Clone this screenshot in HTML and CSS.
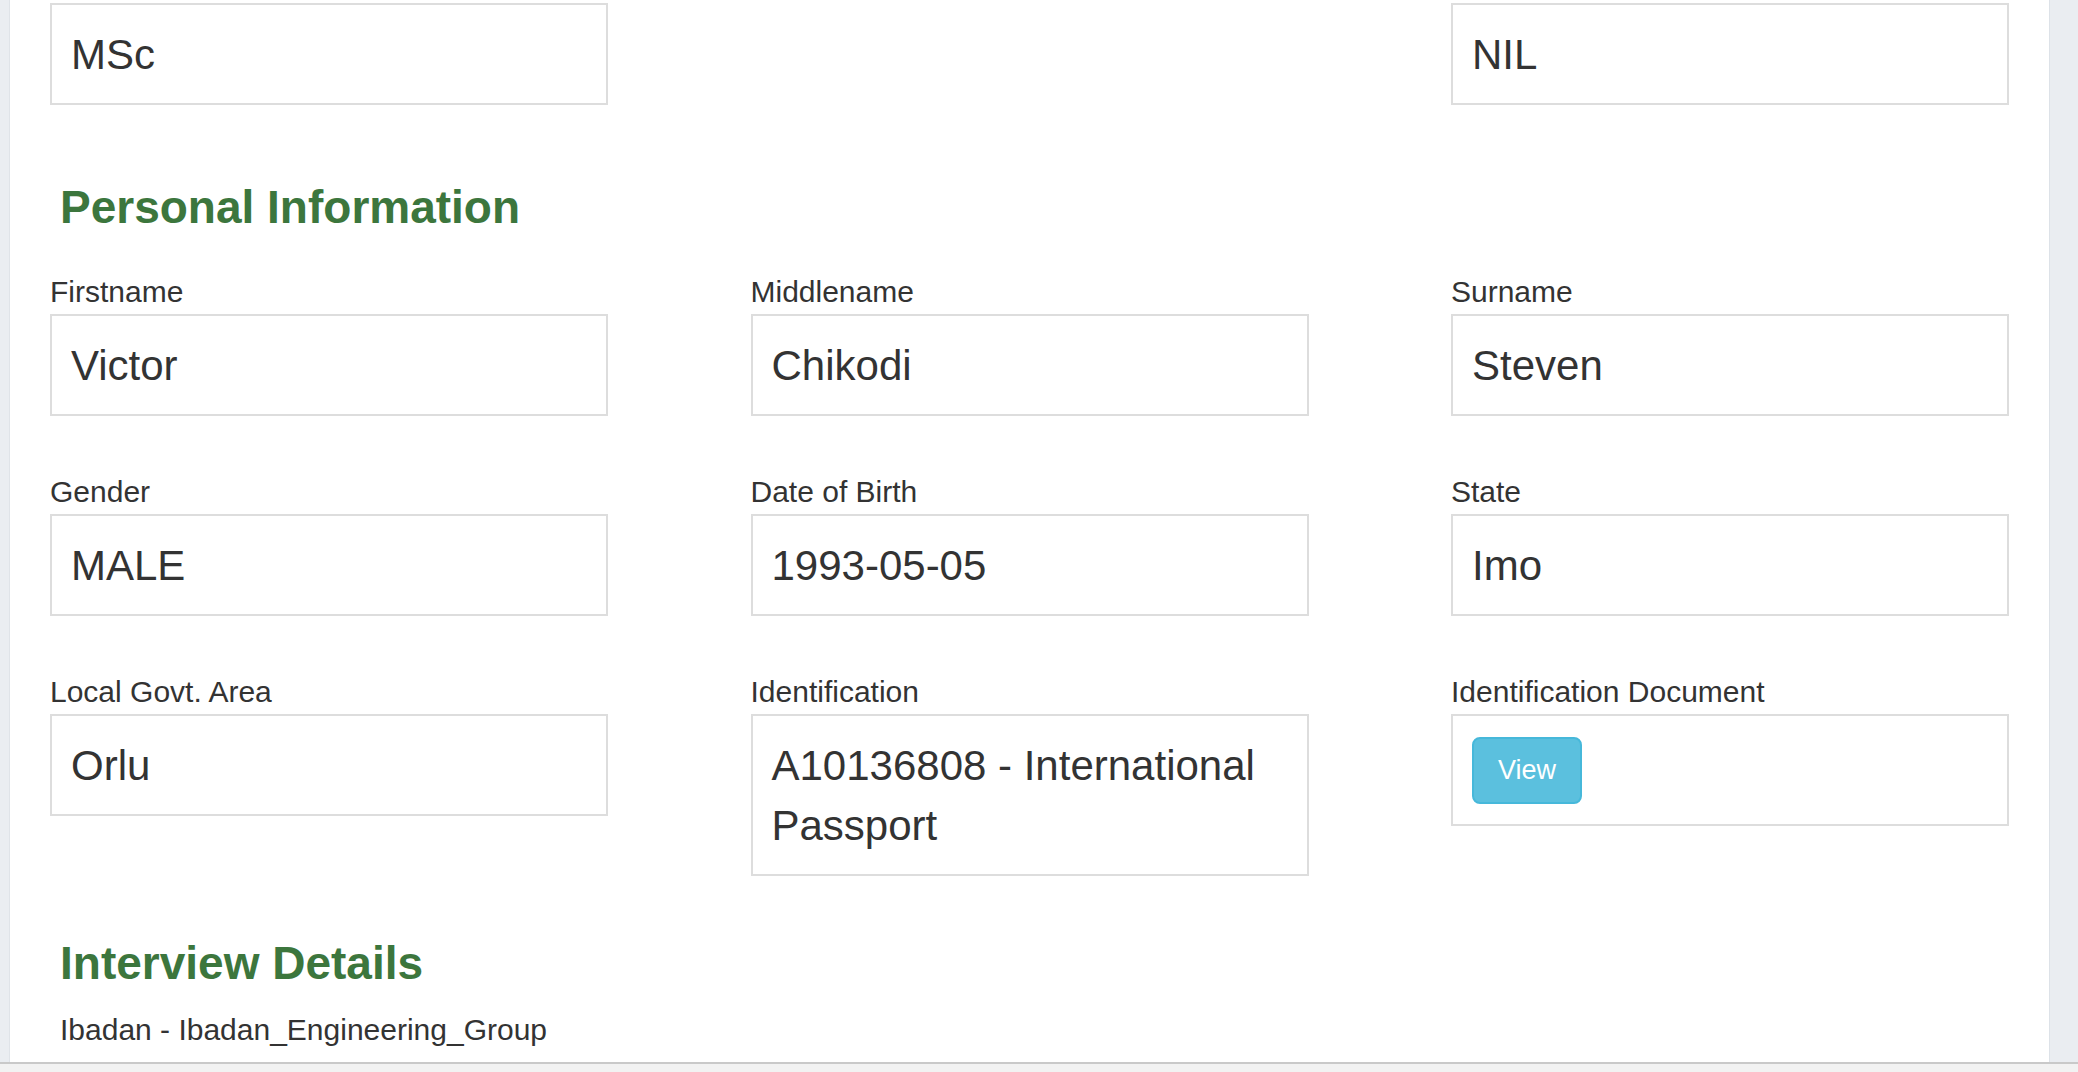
FILE: index.html
```html
<!DOCTYPE html>
<html lang="en">
<head>
<meta charset="utf-8">
<title>Applicant Details</title>
<link rel="stylesheet" href="styles.css">
</head>
<body>
<div class="page">
  <div class="frame">
    <main class="panel">
      <div class="grid top-row">
        <div class="field"><div class="box">MSc</div></div>
        <div class="field empty"></div>
        <div class="field"><div class="box">NIL</div></div>
      </div>

      <h3 class="section-title personal">Personal Information</h3>

      <div class="grid">
        <div class="field">
          <label class="label">Firstname</label>
          <div class="box">Victor</div>
        </div>
        <div class="field">
          <label class="label">Middlename</label>
          <div class="box">Chikodi</div>
        </div>
        <div class="field">
          <label class="label">Surname</label>
          <div class="box">Steven</div>
        </div>

        <div class="field">
          <label class="label">Gender</label>
          <div class="box">MALE</div>
        </div>
        <div class="field">
          <label class="label">Date of Birth</label>
          <div class="box">1993-05-05</div>
        </div>
        <div class="field">
          <label class="label">State</label>
          <div class="box">Imo</div>
        </div>

        <div class="field">
          <label class="label">Local Govt. Area</label>
          <div class="box">Orlu</div>
        </div>
        <div class="field">
          <label class="label">Identification</label>
          <div class="box">A10136808 - International Passport</div>
        </div>
        <div class="field">
          <label class="label">Identification Document</label>
          <div class="box box-action"><a class="btn-info" href="#">View</a></div>
        </div>
      </div>

      <h3 class="section-title interview">Interview Details</h3>
      <p class="detail-text">Ibadan - Ibadan_Engineering_Group</p>
    </main>
  </div>
  <div class="bottom-bar"></div>
</div>
</body>
</html>
```

FILE: styles.css
```css
* {
  box-sizing: border-box;
}

html, body {
  margin: 0;
  padding: 0;
  height: 100%;
}

body {
  font-family: "Liberation Sans", Arial, Helvetica, sans-serif;
  color: #333333;
  background: #f2f2f2;
  overflow: hidden;
}

.page {
  display: flex;
  flex-direction: column;
  height: 1072px;
}

.frame {
  height: 1062px;
  background: #eaedf1;
  display: flex;
  padding: 0 28px 0 9px;
  overflow: hidden;
}

.panel {
  flex: 1;
  background: #ffffff;
  border-left: 1px solid #dfe3e8;
  border-right: 1px solid #dde2e8;
  padding: 3px 0 0 40px;
}

.bottom-bar {
  height: 10px;
  border-top: 2px solid #c9c9c9;
  background: #f2f2f2;
}

.grid {
  display: grid;
  grid-template-columns: repeat(3, 558px);
  column-gap: 142.5px;
  row-gap: 58px;
  align-items: start;
}

.label {
  display: block;
  font-size: 30px;
  line-height: 34px;
  margin-top: 1px;
  margin-bottom: 5px;
  color: #333333;
}

.box {
  border: 2px solid #dddddd;
  padding: 20px 19px 18px;
  font-size: 42px;
  line-height: 60px;
  color: #333333;
  background: #ffffff;
}

.box-action {
  padding-top: 21px;
  padding-bottom: 20px;
}

.btn-info {
  display: inline-block;
  vertical-align: top;
  font-size: 27px;
  line-height: 37px;
  padding: 13px 24px;
  color: #ffffff;
  background: #5bc0de;
  border: 2px solid #46b8da;
  border-radius: 8px;
  text-decoration: none;
}

.section-title {
  margin: 0;
  padding-left: 10px;
  font-size: 46px;
  line-height: 51px;
  font-weight: bold;
  color: #3c763d;
}

.section-title.personal {
  margin-top: 77px;
  margin-bottom: 41px;
}

.section-title.interview {
  margin-top: 62px;
  margin-bottom: 24px;
}

.detail-text {
  margin: 0;
  padding-left: 10px;
  font-size: 30px;
  line-height: 34px;
  color: #333333;
}
```
